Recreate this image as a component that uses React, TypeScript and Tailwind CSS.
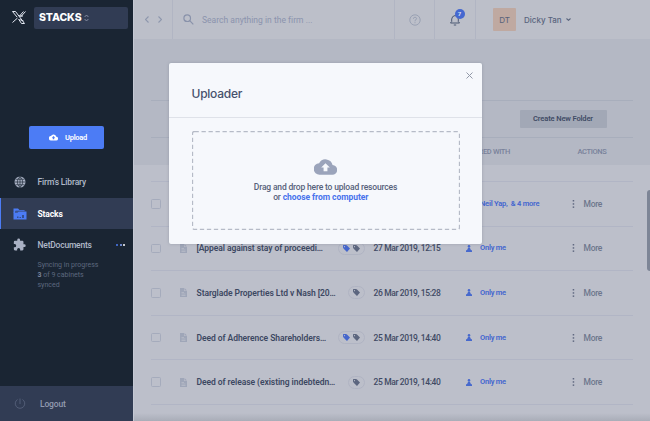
import type { ReactNode } from 'react';

const TagIcon = ({ color }: { color: string }) => (
  <svg className="block h-[7px] w-[7px] shrink-0" viewBox="0 0 14 14" fill={color}>
    <path d="M1 0h5l2 1 6 6-6 7-7-7-1-2V1zM3 2a1.2 1.2 0 1 0 .1 2.400A1.2 1.2 0 0 0 3 2z" fillRule="evenodd" />
  </svg>
);

const FileIcon = () => (
  <svg className="block h-[9px] w-[7px]" viewBox="0 0 14 18">
    <path d="M0 0h8v6h6v12H0z" fill="#9fa6b8" />
    <path d="M9 0l5 5H9z" fill="#9fa6b8" />
    <path d="M3 9h5M3 12h8M3 15h8" stroke="#bcbfca" strokeWidth="1.300" />
  </svg>
);

const PersonIcon = () => (
  <svg className="block h-[7px] w-[6px]" viewBox="0 0 12 14" fill="#4769cd">
    <circle cx="6" cy="2.800" r="2.600" />
    <path d="M4 6h4l1.500 3.500L12 11v3H0v-3l2.500-1.500z" />
  </svg>
);

const CloudIcon = ({ className, arrow }: { className: string; arrow: string }) => (
  <svg className={className} viewBox="0 0 24 16">
    <path d="M19.350 6A7.500 7.500 0 0 0 5.350 4 6 6 0 0 0 6 16h13a5 5 0 0 0 .350-10z" fill="currentColor" />
    <path d="M12 4l4.500 4.500H14V12.500h-4V8.500H7.500z" fill={arrow} />
  </svg>
);

type Doc = { title: ReactNode; tags: number; date: string; shared: string };

const docs: Doc[] = [
  { title: '', tags: 0, date: '', shared: 'Neil Yap,  & 4 more' },
  { title: '[Appeal against stay of proceedi…', tags: 2, date: '27 Mar 2019, 12:15', shared: 'Only me' },
  { title: 'Starglade Properties Ltd v Nash [20…', tags: 1, date: '26 Mar 2019, 15:28', shared: 'Only me' },
  { title: 'Deed of Adherence Shareholders…', tags: 2, date: '25 Mar 2019, 14:40', shared: 'Only me' },
  { title: 'Deed of release (existing indebtedn…', tags: 1, date: '25 Mar 2019, 14:40', shared: 'Only me' },
];

function Row({ doc }: { doc: Doc }) {
  return (
    <div className="flex h-[44.6px] w-[482px] shrink-0 items-center border-t border-[#b1b5c5] whitespace-pre">
      <div className="h-[9.500px] w-[9.500px] shrink-0 rounded-[1.500px] border border-[#a5abbc]" />
      <div className="ml-[19px] w-[17px] shrink-0"><FileIcon /></div>
      <div className="w-[140px] shrink-0 text-[8.500px] font-semibold tracking-[-0.060px] text-[#3c4862]">{doc.title}</div>
      <div className="flex w-[28px] shrink-0 justify-end">
        {doc.tags > 0 && (
          <div className="flex h-[13px] items-center gap-[3px] rounded-full border border-[#b0b4c3] px-[4px]">
            {doc.tags === 2 && <TagIcon color="#4566cc" />}
            <TagIcon color="#5c667f" />
          </div>
        )}
      </div>
      <div className="ml-[9px] w-[92.500px] shrink-0 text-[8.500px] font-medium tracking-[-0.380px] text-[#3f4a64]">{doc.date}</div>
      <div className="w-[14px] shrink-0"><PersonIcon /></div>
      <div className="w-[92px] shrink-0 text-[7.500px] font-semibold tracking-[-0.220px] text-[#4265cf]">{doc.shared}</div>
      <svg className="mr-[8.500px] h-2 w-[3px] shrink-0" viewBox="0 0 3 8" fill="#606980">
        <rect x=".7" width="1.500" height="1.500" /><rect x=".7" y="3.200" width="1.500" height="1.500" /><rect x=".7" y="6.400" width="1.500" height="1.500" />
      </svg>
      <div className="text-[8.500px] font-medium tracking-[-0.300px] text-[#6d768c]">More</div>
    </div>
  );
}

function Sidebar() {
  return (
    <aside className="flex h-full w-[133px] shrink-0 flex-col bg-[#1a2533]">
      <div className="flex h-[35px] shrink-0 items-center pl-3">
        <svg className="h-[15px] w-[14px]" viewBox="0 0 28 30" fill="none" stroke="#e3e8f2" strokeWidth="2">
          <path d="M1 3h6l18 24h-6L13 18M1 3l9 11M27 3L17 14M23 3l-8 9M11 16L1 25M15 19l8 3M14 12l8 0" />
        </svg>
        <div className="ml-2 flex h-[22px] w-[94px] items-center rounded-[2px] bg-[#313c54] pl-[5px]">
          <span className="font-['Inter'] text-[10.500px] font-extrabold tracking-[-0.100px] text-white">STACKS</span>
          <svg className="ml-[3px] h-[8px] w-[5px]" viewBox="0 0 5 8" fill="none" stroke="#8c95a9" strokeWidth=".9"><path d="M.6 3L2.500 1l1.900 2M.6 5l1.900 2 1.900-2" /></svg>
        </div>
      </div>
      <button className="mt-[91px] ml-[29px] flex h-[23px] w-[75px] shrink-0 items-center rounded-[2px] bg-[#4c7cf5] pl-5 text-white">
        <CloudIcon className="h-[7px] w-[9px]" arrow="#4c7cf5" />
        <span className="ml-[7px] text-[7.500px] font-semibold tracking-[-0.250px]">Upload</span>
      </button>
      <nav className="mt-[17px] text-[8.500px] font-medium tracking-[-0.150px] text-[#b1b9c9]">
        <div className="flex h-8 items-center pl-[14px]">
          <svg className="h-3 w-3" viewBox="0 0 24 24"><circle cx="12" cy="12" r="11" fill="#a9b1c4" /><path d="M1 12h22M3 6.500h18M3 17.500h18M12 1v22M12 1Q1 12 12 23M12 1Q23 12 12 23" fill="none" stroke="#1a2533" strokeWidth="1.300" /></svg>
          <span className="ml-[11.500px]">Firm's Library</span>
        </div>
        <div className="flex h-[31px] items-center border-l border-[#4c7cf5] bg-[#313c54] pl-3">
          <svg className="h-3 w-[14px]" viewBox="0 0 28 24"><path d="M1 1h9l3 3h10v3H4v3H1z" fill="#4c7cf5" /><path d="M1 9h8l3-2h15v16H1z" fill="#4c7cf5" /><path d="M8 17h3v3H8zM18 14h4v6h-4zM13 18h3v2h-3z" fill="#34508f" /><path d="M5 6h18" stroke="#313c54" strokeWidth="1" /></svg>
          <span className="ml-[10.500px] font-bold text-white">Stacks</span>
        </div>
        <div className="flex h-[31px] items-center pl-[13px]">
          <svg className="h-[13px] w-[13px]" viewBox="1 0 22 23" fill="#a9b1c4"><path d="M20.500 11H19V7a2 2 0 0 0-2-2h-4V3.500a2.500 2.500 0 0 0-5 0V5H4a2 2 0 0 0-2 2v3.800h1.500a2.700 2.700 0 0 1 0 5.400H2V20a2 2 0 0 0 2 2h3.800v-1.500a2.700 2.700 0 0 1 5.400 0V22H17a2 2 0 0 0 2-2v-4h1.500a2.500 2.500 0 0 0 0-5z" /></svg>
          <span className="ml-[11.500px] tracking-[-0.220px]">NetDocuments</span>
          <span className="ml-auto mr-2 flex gap-[1.500px]">
            <i className="h-[2px] w-[2px] rounded-full bg-[#4c7cf5]" /><i className="h-[2px] w-[2px] rounded-full bg-[#88a9ff]" /><i className="h-[2px] w-[2px] rounded-full bg-white" />
          </span>
        </div>
      </nav>
      <p className="ml-[37.500px] text-[7px] leading-[10px] text-[#5d687f]">Syncing in progress<br /><b className="text-[#7a849b]">3</b> of 9 cabinets<br />synced</p>
      <div className="mt-auto flex h-[35px] items-center bg-[#313c54] pl-[14px]">
        <svg className="h-[11px] w-[12px]" viewBox="0 0 24 22" fill="none" stroke="#56617a" strokeWidth="1.800"><path d="M7 3a9.500 9.500 0 1 0 10 0M12 1v11" /></svg>
        <span className="ml-[14px] text-[8.500px] font-medium tracking-[-0.150px] text-[#919bb0]">Logout</span>
      </div>
    </aside>
  );
}

function TopBar() {
  return (
    <header className="flex h-[39px] shrink-0 bg-[#bcbfc9]">
      <div className="flex w-[39px] items-center gap-[9px] border-r border-[#b1b5c3] pl-[11px]">
        <svg className="h-[7px] w-1" viewBox="0 0 4 7" fill="none" stroke="#8e97ad" strokeWidth="1.100"><path d="M3.500.5l-3 3 3 3" /></svg>
        <svg className="h-[7px] w-1" viewBox="0 0 4 7" fill="none" stroke="#8e97ad" strokeWidth="1.100"><path d="M.5.5l3 3-3 3" /></svg>
      </div>
      <div className="flex w-[222px] items-center border-r border-[#b1b5c3] pl-[10px]">
        <svg className="h-[11px] w-[11px]" viewBox="0 0 11 11" fill="none" stroke="#8992aa" strokeWidth="1.200"><circle cx="4.200" cy="4.200" r="3.300" /><path d="M6.700 6.700l3.600 3.600" /></svg>
        <span className="ml-2 text-[8.500px] tracking-[0.020px] text-[#8b93ad]">Search anything in the firm ...</span>
      </div>
      <div className="flex w-10 items-center justify-center border-r border-[#b1b5c3]">
        <svg className="h-3 w-3" viewBox="0 0 12 12" fill="none" stroke="#9199ad" strokeWidth=".8"><circle cx="6" cy="6" r="5.200" /><path d="M4.400 4.800Q4.500 3.200 6 3.200T7.600 4.700Q7.600 5.500 6 6.400v.9M6 8.200v1" /></svg>
      </div>
      <div className="flex w-[41px] items-center justify-center border-r border-[#b1b5c3]">
        <div className="relative h-[12px] w-[10px]">
          <svg className="h-[12px] w-[10px]" viewBox="0 0 10 12" fill="none" stroke="#4b5872" strokeWidth="1"><path d="M.5 9h9L8.300 7.500V5Q8 2 5 1.500 2 2 1.700 5v2.500zM3.800 11h2.400" /></svg>
          <span className="absolute -top-[5px] left-[4.500px] flex h-[10px] w-[10px] items-center justify-center rounded-full bg-[#4568d0] text-[6px] font-bold text-[#dde3f5]">7</span>
        </div>
      </div>
      <div className="flex items-center pl-[17px] font-['Inter']">
        <span className="flex h-[23px] w-[23px] items-center justify-center rounded-[1px] bg-[#bfa9a1] text-[8px] text-[#57627a]">DT</span>
        <span className="ml-2 text-[8px] font-medium text-[#59647d]">Dicky Tan</span>
        <svg className="ml-[4px] h-[3px] w-[5px]" viewBox="0 0 5 3" fill="none" stroke="#59647d" strokeWidth="1.100"><path d="M.5.5l2 1.800 2-1.800" /></svg>
      </div>
    </header>
  );
}

function Uploader() {
  return (
    <section className="absolute top-[63px] left-[169px] flex h-[181px] w-[313px] flex-col rounded-[2px] bg-[#f6f8fc] shadow-[0_0_3px_rgba(90,100,120,0.35)]">
      <div className="flex h-[55px] shrink-0 justify-between border-b border-[#dfe2e9]">
        <h1 className="mt-[22px] ml-[22.500px] font-['Inter'] text-[12px] leading-[18px] font-medium tracking-[-0.250px] text-[#46516c]">Uploader</h1>
        <svg className="mt-[9px] mr-[9px] h-[7px] w-[7px]" viewBox="0 0 7 7" stroke="#9299a8" strokeWidth="1"><path d="M.5.5l6 6M6.500.5l-6 6" /></svg>
      </div>
      <div className="relative mt-[13px] ml-[22.500px] flex h-[99px] w-[268px] flex-col items-center pt-7">
        <svg className="absolute inset-0 h-full w-full" viewBox="0 0 268 99" fill="none"><rect x=".5" y=".5" width="267" height="98" rx="2" stroke="#b6bbc7" strokeWidth="1.300" strokeDasharray="4.300 2.700" /></svg>
        <CloudIcon className="h-[16px] w-[23px] text-[#9ba4bb]" arrow="#f6f8fc" />
        <p className="mt-[7px] text-center text-[8.500px] leading-[10px] font-medium tracking-[-0.170px] text-[#57617a]">
          Drag and drop here to upload resources<br />or <b className="mr-[9.500px] tracking-[-0.060px] text-[#4772ec]">choose from computer</b>
        </p>
      </div>
    </section>
  );
}

export default function App() {
  return (
    <div className="relative flex h-[421px] w-[650px] overflow-hidden bg-[#bcbfca] font-['Roboto','Liberation_Sans',sans-serif] leading-[10px]">
      <Sidebar />
      <main className="flex min-w-0 flex-1 flex-col border-l border-[#c5c9d4]">
        <TopBar />
        <div className="flex h-[126px] shrink-0 flex-col bg-[#b4b8c4] pl-[17px]">
          <div className="mt-[61px] flex h-[38px] w-[482px] items-center justify-end border-y border-[#a8aebc] pr-[26.500px]">
            <div className="flex h-[18px] w-[87px] items-center justify-center rounded-[1px] bg-[#a2a8b6] text-[7.500px] font-semibold tracking-[-0.120px] text-[#3f4b65]">Create New Folder</div>
          </div>
          <div className="flex h-[27px] w-[482px] items-center justify-end pr-[26.500px] text-[7.500px] font-medium tracking-[-0.350px] text-[#78819a]">
            <span className="mr-[67.500px]">SHARED WITH</span><span>ACTIONS</span>
          </div>
        </div>
        <div className="flex min-h-0 flex-1 justify-between">
          <div className="mt-4 flex flex-col pl-[17px]">
            {docs.map((doc, i) => <Row key={i} doc={doc} />)}
            <div className="w-[482px] border-t border-[#b1b5c5]" />
          </div>
          <div className="mt-[25px] h-[81px] w-[3px] rounded-l-full bg-[#7d8596]" />
        </div>
        <div className="h-[8px] shrink-0 bg-gradient-to-b from-[#bcbfca] to-[#a9adb8]" />
      </main>
      <Uploader />
    </div>
  );
}
